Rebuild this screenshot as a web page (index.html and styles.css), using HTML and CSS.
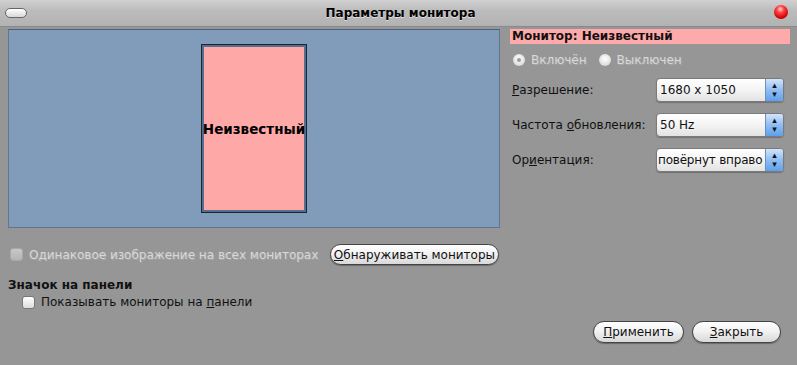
FILE: index.html
```html
<!DOCTYPE html>
<html lang="ru">
<head>
  <meta charset="UTF-8" />
  <title>Параметры монитора</title>
  <link rel="stylesheet" href="styles.css">
</head>
<body>
  <div class="window">
    <div class="titlebar">
      <span class="shade-btn"></span>
      <span class="title">Параметры монитора</span>
      <span class="close-btn"></span>
    </div>

    <div class="content">
      <div class="left">
        <div class="canvas">
          <div class="monitor"><span>Неизвестный</span></div>
        </div>
        <div class="mirror-row">
          <label class="check disabled"><span class="box"></span><span>Одинаковое изображение на всех мониторах</span></label>
          <button class="pill"><u>О</u>бнаруживать мониторы</button>
        </div>
        <div class="section-title">Значок на панели</div>
        <label class="check indent"><span class="box"></span><span>Показывать мониторы на <u>п</u>анели</span></label>
      </div>

      <div class="right">
        <div class="mon-name">Монитор: Неизвестный</div>
        <div class="radios">
          <label class="radio disabled"><span class="dot on"></span><span>Включён</span></label>
          <label class="radio disabled"><span class="dot"></span><span>Выключен</span></label>
        </div>
        <div class="field">
          <span class="lbl"><u>Р</u>азрешение:</span>
          <div class="combo"><span class="val">1680 x 1050</span><span class="spin">▴<br>▾</span></div>
        </div>
        <div class="field">
          <span class="lbl">Частота <u>о</u>бновления:</span>
          <div class="combo"><span class="val">50 Hz</span><span class="spin">▴<br>▾</span></div>
        </div>
        <div class="field">
          <span class="lbl">Ор<u>и</u>ентация:</span>
          <div class="combo"><span class="val tight">повёрнут вправо</span><span class="spin">▴<br>▾</span></div>
        </div>
        <div class="actions">
          <button class="pill wide"><u>П</u>рименить</button>
          <button class="pill wide"><u>З</u>акрыть</button>
        </div>
      </div>
    </div>
  </div>
</body>
</html>
```

FILE: styles.css
```css
body {
  margin: 0;
  font-family: "DejaVu Sans", sans-serif;
  font-size: 12px;
  color: #111;
  background: #949494;
}
.window {
  width: 797px;
  height: 365px;
  background: #969696;
  overflow: hidden;
}
.titlebar {
  height: 27px;
  display: flex;
  align-items: center;
  justify-content: space-between;
  padding: 0 9px 0 5px;
  background: linear-gradient(#d0d0d0, #bcbcbc 40%, #b2b2b2);
  border-bottom: 1px solid #8a8a8a;
  box-sizing: border-box;
}
.title {
  font-weight: bold;
  font-size: 12px;
  color: #000;
  text-shadow: 0 1px 0 #e0e0e0;
}
.shade-btn {
  width: 20px;
  height: 8px;
  border: 1px solid #666;
  border-radius: 6px;
  background: linear-gradient(#ffffff, #d8d8d8);
}
.close-btn {
  width: 14px;
  height: 14px;
  margin-top: -2px;
  border-radius: 50%;
  background: radial-gradient(circle at 45% 30%, #ffd0d0 0, #ff4040 30%, #d00000 70%, #900 100%);
}
.content {
  display: flex;
  padding-top: 2px;
}
.left {
  width: 502px;
  padding-left: 8px;
  box-sizing: border-box;
}
.canvas {
  width: 492px;
  height: 199px;
  box-sizing: border-box;
  background: #809cba;
  border: 1px solid #5f7590;
  border-top-color: #4d6078;
  display: flex;
  align-items: center;
  justify-content: center;
}
.monitor {
  width: 106px;
  height: 169px;
  box-sizing: border-box;
  border: 1px solid #1c2430;
  box-shadow: inset 0 0 0 2px #566f8f;
  background: #ffa8a8;
  display: flex;
  align-items: center;
  justify-content: center;
}
.monitor span {
  font-weight: bold;
  font-size: 13.5px;
  color: #000;
  white-space: nowrap;
}
.mirror-row {
  display: flex;
  align-items: center;
  justify-content: space-between;
  margin-top: 16px;
  padding-left: 2px;
  padding-right: 3px;
}
.check {
  display: flex;
  align-items: center;
  gap: 6px;
  white-space: nowrap;
}
.box {
  width: 11px;
  height: 11px;
  border: 1px solid #777;
  border-radius: 3px;
  background: linear-gradient(#ffffff, #dcdcdc);
}
.disabled {
  color: #d8d8d8;
  text-shadow: 1px 1px 0 #a6a6a6;
}
.check.disabled .box {
  border-color: #a8a8a8;
  background: linear-gradient(#c8c8c8, #b4b4b4);
}
.pill {
  font-family: "DejaVu Sans", sans-serif;
  font-size: 12px;
  color: #111;
  padding: 0 3px;
  height: 21px;
  white-space: nowrap;
  border: 1px solid #444;
  border-radius: 11px;
  background: linear-gradient(#ffffff, #f2f2f2 45%, #d8d8d8);
  box-shadow: 0 1px 1px rgba(0, 0, 0, 0.3);
}
.section-title {
  font-weight: bold;
  font-size: 12px;
  margin-top: 13px;
}
.check.indent {
  margin-left: 14px;
  margin-top: 3px;
}
.right {
  width: 280px;
  margin-left: 8px;
}
.mon-name {
  background: #ffaaaa;
  font-weight: bold;
  font-size: 12px;
  height: 15px;
  line-height: 15px;
  padding-left: 2px;
}
.radios {
  display: flex;
  gap: 12px;
  margin-top: 9px;
  padding-left: 3px;
}
.radio {
  display: flex;
  align-items: center;
  gap: 6px;
}
.dot {
  width: 12px;
  height: 12px;
  border-radius: 50%;
  background: radial-gradient(circle at 50% 40%, #ffffff, #e2e2e2 60%, #c4c4c4);
  position: relative;
}
.dot.on::after {
  content: "";
  position: absolute;
  left: 4px;
  top: 4px;
  width: 4px;
  height: 4px;
  border-radius: 50%;
  background: #9a9a9a;
}
.field {
  display: flex;
  align-items: center;
  justify-content: space-between;
  height: 24px;
  margin-top: 11px;
  padding-left: 2px;
  white-space: nowrap;
}
.field:first-of-type {
  margin-top: 10px;
}
.combo {
  width: 128px;
  height: 24px;
  margin-right: 6px;
  box-sizing: border-box;
  display: flex;
  border: 1px solid #7a7a7a;
  border-radius: 4px;
  background: linear-gradient(#ffffff, #f4f4f4 50%, #e2e2e2);
  overflow: hidden;
  box-shadow: 0 1px 1px rgba(0, 0, 0, 0.25);
}
.val {
  flex: 1;
  min-width: 0;
  padding-left: 3px;
  line-height: 22px;
  white-space: nowrap;
}
.val.tight {
  padding-left: 1px;
  letter-spacing: -0.2px;
}
.spin {
  width: 17px;
  flex: none;
  font-size: 9px;
  line-height: 9px;
  text-align: center;
  padding-top: 2px;
  color: #111;
  background: linear-gradient(#d2e4fa, #8fbdf3 50%, #5da0ee);
  border-left: 1px solid #6d8fb8;
}
.actions {
  display: flex;
  justify-content: flex-end;
  gap: 8px;
  margin-top: 149px;
  margin-right: 9px;
}
.pill.wide {
  width: 91px;
  height: 22px;
}
.pill.wide:last-child {
  width: 89px;
}
```
